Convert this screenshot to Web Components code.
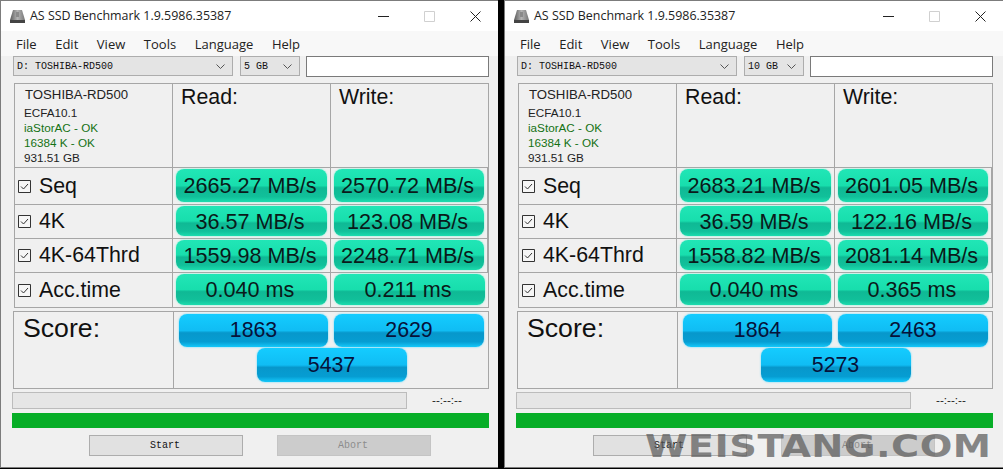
<!DOCTYPE html>
<html lang="en">
<head>
<meta charset="utf-8">
<title>AS SSD Benchmark</title>
<style>
  html, body { margin: 0; background: #000; overflow: hidden; }
  body { width: 1003px; height: 469px; }
</style>
</head>
<body>
<bench-page>
  <ssd-window size="5 GB"
    seq-r="2665.27 MB/s" seq-w="2570.72 MB/s"
    k4-r="36.57 MB/s" k4-w="123.08 MB/s"
    thrd-r="1559.98 MB/s" thrd-w="2248.71 MB/s"
    acc-r="0.040 ms" acc-w="0.211 ms"
    score-r="1863" score-w="2629" score-t="5437"></ssd-window>
  <ssd-window size="10 GB"
    seq-r="2683.21 MB/s" seq-w="2601.05 MB/s"
    k4-r="36.59 MB/s" k4-w="122.16 MB/s"
    thrd-r="1558.82 MB/s" thrd-w="2081.14 MB/s"
    acc-r="0.040 ms" acc-w="0.365 ms"
    score-r="1864" score-w="2463" score-t="5273"></ssd-window>
  <water-mark>WEISTANG.COM</water-mark>
</bench-page>

<script>
class BenchPage extends HTMLElement {
  connectedCallback() {
    if (this.shadowRoot) return;
    this.attachShadow({ mode: "open" });
    this.shadowRoot.innerHTML = `
<style>
  :host {
    display: flex;
    gap: 6px;
    position: relative;
    width: 1003px;
    height: 469px;
    background: #000;
  }
</style>
<slot></slot>`;
  }
}

class WaterMark extends HTMLElement {
  connectedCallback() {
    if (this.shadowRoot) return;
    this.attachShadow({ mode: "open" });
    this.shadowRoot.innerHTML = `
<style>
  :host {
    position: absolute;
    left: 645px;
    top: 428px;
    display: block;
    font: bold 32px/36px "DejaVu Sans", sans-serif;
    letter-spacing: 0.4px;
    color: rgba(92, 92, 92, 0.72);
    white-space: nowrap;
    transform: scaleX(1.2);
    transform-origin: left center;
  }
</style>
<slot></slot>`;
  }
}

class TitleBar extends HTMLElement {
  connectedCallback() {
    if (this.shadowRoot) return;
    this.attachShadow({ mode: "open" });
    this.shadowRoot.innerHTML = `
<style>
  :host {
    display: flex;
    align-items: center;
    height: 30px;
    background: #fff;
    font: 12.45px "Open Sans", sans-serif;
    color: #222;
  }
  .icon { margin: 0 4px 0 8px; }
  .text { flex: 1; padding-bottom: 1px; }
  .btn { width: 46px; height: 30px; display: flex; align-items: center; justify-content: center; }
</style>
<svg class="icon" width="17" height="15" viewBox="0 0 17 15">
  <defs>
    <linearGradient id="hdd" x1="0" x2="1" y1="0" y2="0">
      <stop offset="0" stop-color="#5c5c5c"/><stop offset=".5" stop-color="#b4b4b4"/><stop offset="1" stop-color="#777"/>
    </linearGradient>
  </defs>
  <path d="M4 1h9l3 10H1z" fill="url(#hdd)"/>
  <path d="M1 11h15v3H1z" fill="#444"/>
  <path d="M7 3h3v5H7z" fill="#8a8a8a"/>
</svg>
<span class="text"><slot></slot></span>
<span class="btn"><svg width="11" height="11" viewBox="0 0 11 11"><path d="M0 5.5h11" stroke="#222" stroke-width="1"/></svg></span>
<span class="btn"><svg width="11" height="11" viewBox="0 0 11 11"><path d="M.5.5h10v10H.5z" fill="none" stroke="#d0d0d0"/></svg></span>
<span class="btn"><svg width="11" height="11" viewBox="0 0 11 11"><path d="M.5.5l10 10M10.5.5l-10 10" stroke="#222" fill="none"/></svg></span>`;
  }
}

class MenuBar extends HTMLElement {
  connectedCallback() {
    if (this.shadowRoot) return;
    this.attachShadow({ mode: "open" });
    this.shadowRoot.innerHTML = `
<style>
  :host {
    display: flex;
    align-items: center;
    gap: 18.6px;
    height: 25px;
    padding-left: 15px;
    background: #f8f8f8;
    font: 13px "Open Sans", sans-serif;
    color: #222;
  }
</style>
<span>File</span><span>Edit</span><span>View</span><span>Tools</span><span>Language</span><span>Help</span>`;
  }
}

class ComboBox extends HTMLElement {
  connectedCallback() {
    if (this.shadowRoot) return;
    this.attachShadow({ mode: "open" });
    this.shadowRoot.innerHTML = `
<style>
  :host {
    display: flex;
    align-items: center;
    justify-content: space-between;
    box-sizing: border-box;
    height: 20px;
    padding: 0 7px 0 3px;
    background: #e4e4e4;
    border: 1px solid #adadad;
    font: 10px "Liberation Mono", monospace;
    color: #111;
  }
</style>
<slot></slot>
<svg width="9" height="5" viewBox="0 0 9 5"><path d="M.5.5l4 4 4-4" fill="none" stroke="#555"/></svg>`;
  }
}

class ValuePill extends HTMLElement {
  connectedCallback() {
    if (this.shadowRoot) return;
    this.attachShadow({ mode: "open" });
    this.shadowRoot.innerHTML = `
<style>
  :host {
    display: flex;
    align-items: center;
    justify-content: center;
    box-sizing: border-box;
    padding: 1px 3px 0 0;
    border-radius: 8px;
    font: 21.6px "Liberation Sans", sans-serif;
    color: #0a1a1a;
    white-space: nowrap;
    background: linear-gradient(#21e6b6 0, #18dead 50%, #0fb995 57%, #11c09a 84%, #1cdcae 100%);
    box-shadow: 0 0 2px #6ef3d2;
  }
  :host([kind="score"]) {
    padding: 0;
    font-size: 21.33px;
    color: #06123a;
    background: linear-gradient(#14ccff 0, #10bdf4 50%, #0797cb 57%, #069dd2 84%, #14c8fa 100%);
    box-shadow: 0 0 2px #4fd8ff;
  }
</style>
<slot></slot>`;
  }
}

class ResultCell extends HTMLElement {
  connectedCallback() {
    if (this.shadowRoot) return;
    this.attachShadow({ mode: "open" });
    this.shadowRoot.innerHTML = `
<style>
  :host {
    display: grid;
    box-sizing: border-box;
    padding: 1px 3px 2px;
    border-top: 1px solid #a6a6a6;
    border-right: 1px solid #a6a6a6;
  }
  :host(:last-child) { border-right: 0; }
</style>
<slot></slot>`;
  }
}

class RowLabel extends HTMLElement {
  connectedCallback() {
    if (this.shadowRoot) return;
    this.attachShadow({ mode: "open" });
    this.shadowRoot.innerHTML = `
<style>
  :host {
    display: flex;
    align-items: center;
    gap: 8px;
    box-sizing: border-box;
    padding: 0 0 0 3px;
    border-top: 1px solid #a6a6a6;
    border-right: 1px solid #a6a6a6;
    font: 21.33px "Liberation Sans", sans-serif;
    color: #111;
  }
</style>
<svg width="13" height="13" viewBox="0 0 13 13">
  <path d="M.5.5h12v12H.5z" fill="#f6f6f6" stroke="#333"/>
  <path d="M3 6.5l2.5 2.5 4.5-5" fill="none" stroke="#333"/>
</svg>
<slot></slot>`;
  }
}

class ScorePanel extends HTMLElement {
  connectedCallback() {
    if (this.shadowRoot) return;
    this.attachShadow({ mode: "open" });
    this.shadowRoot.innerHTML = `
<style>
  :host {
    display: grid;
    grid-template-columns: 160px 1fr;
    box-sizing: border-box;
    height: 78px;
    margin: 3px 0 0 -1px;
    border: 1px solid #a6a6a6;
  }
  .name {
    border-right: 1px solid #a6a6a6;
    padding: 0 0 0 9px;
    font: 26.67px/32px "Liberation Sans", sans-serif;
    color: #111;
  }
  .vals {
    display: grid;
    grid-template-columns: 149px 150px;
    grid-template-rows: 33px 34px;
    gap: 1px 6px;
    padding: 2px 0 0 5px;
  }
  .total { grid-column: 1 / 3; justify-self: center; width: 150px; }
</style>
<div class="name">Score:</div>
<div class="vals">
  <value-pill kind="score"><slot name="r"></slot></value-pill>
  <value-pill kind="score"><slot name="w"></slot></value-pill>
  <value-pill kind="score" class="total"><slot name="t"></slot></value-pill>
</div>`;
  }
}

const windowTemplate = document.createElement("template");
windowTemplate.innerHTML = `
<style>
  :host {
    display: flex;
    flex-direction: column;
    flex: 0 0 498px;
    box-sizing: border-box;
    height: 468px;
    background: #f0f0f0;
    border: 1px solid #7c7c7c;
    border-right: 0;
  }
  :host(:last-of-type) { flex: 0 0 499px; }
  .tools {
    display: grid;
    grid-template-columns: 220px 60px 183px;
    column-gap: 7px;
    padding-left: 12px;
    height: 21px;
  }
  .tools input {
    box-sizing: border-box;
    height: 21px;
    margin-left: -1px;
    width: 183px;
    border: 1px solid #7a7a7a;
    background: #fff;
    padding: 0;
  }
  .main { margin: 6px 0 0 13px; width: 475px; }
  .table {
    display: grid;
    grid-template-columns: 158px 158px 157px;
    grid-template-rows: 83px 37px 34px 34px 35px;
    box-sizing: border-box;
    border: 1px solid #a6a6a6;
    height: 225px;
  }
  .head {
    border-right: 1px solid #a6a6a6;
    padding: 0 0 0 8px;
    font: 21.33px/26px "Liberation Sans", sans-serif;
    color: #111;
  }
  .head:last-of-type { border-right: 0; }
  .drive {
    border-right: 1px solid #a6a6a6;
    padding: 3px 0 0 9px;
    font: 11.7px/15px "Liberation Sans", sans-serif;
    color: #222;
  }
  .drive .name { font-size: 13.2px; padding-left: 1px; line-height: 16px; margin-bottom: 2px; }
  .drive .ok { color: #147214; }
  .progress {
    display: flex;
    align-items: center;
    margin: 3px 0 0 11px;
    height: 17px;
  }
  .progress .track {
    box-sizing: border-box;
    width: 395px;
    height: 17px;
    background: #e6e6e6;
    border: 1px solid #bcbcbc;
  }
  .progress .time {
    margin: 0 0 3px 25px;
    font: 11.7px "Liberation Sans", sans-serif;
    color: #222;
  }
  .bar { margin: 4px 0 0 11px; width: 477px; height: 15px; background: #07ae27; }
  .buttons { display: flex; gap: 34px; margin: 7px 0 0 88px; }
  .buttons span {
    box-sizing: border-box;
    width: 154px;
    height: 21px;
    display: flex;
    align-items: center;
    justify-content: center;
    padding-right: 2px;
    background: #e1e1e1;
    border: 1px solid #adadad;
    font: 10px "Liberation Mono", monospace;
    color: #111;
  }
  .buttons .off { background: #cccccc; border-color: #c4c4c4; color: #8c8c8c; }
</style>
<title-bar>AS SSD Benchmark 1.9.5986.35387</title-bar>
<menu-bar></menu-bar>
<div class="tools">
  <combo-box>D: TOSHIBA-RD500</combo-box>
  <combo-box id="size"></combo-box>
  <input type="text" aria-label="Comment">
</div>
<div class="main">
  <div class="table">
    <div class="drive">
      <div class="name">TOSHIBA-RD500</div>
      <div>ECFA10.1</div>
      <div class="ok">iaStorAC - OK</div>
      <div class="ok">16384 K - OK</div>
      <div>931.51 GB</div>
    </div>
    <div class="head">Read:</div>
    <div class="head">Write:</div>
    <row-label>Seq</row-label>
    <result-cell><value-pill id="seq-r"></value-pill></result-cell>
    <result-cell><value-pill id="seq-w"></value-pill></result-cell>
    <row-label>4K</row-label>
    <result-cell><value-pill id="k4-r"></value-pill></result-cell>
    <result-cell><value-pill id="k4-w"></value-pill></result-cell>
    <row-label>4K-64Thrd</row-label>
    <result-cell><value-pill id="thrd-r"></value-pill></result-cell>
    <result-cell><value-pill id="thrd-w"></value-pill></result-cell>
    <row-label>Acc.time</row-label>
    <result-cell><value-pill id="acc-r"></value-pill></result-cell>
    <result-cell><value-pill id="acc-w"></value-pill></result-cell>
  </div>
  <score-panel>
    <span slot="r" id="score-r"></span>
    <span slot="w" id="score-w"></span>
    <span slot="t" id="score-t"></span>
  </score-panel>
</div>
<div class="progress"><div class="track"></div><div class="time">--:--:--</div></div>
<div class="bar"></div>
<div class="buttons"><span>Start</span><span class="off">Abort</span></div>`;

class SsdWindow extends HTMLElement {
  connectedCallback() {
    if (this.shadowRoot) return;
    var self = this;
    self.attachShadow({ mode: "open" });
    self.shadowRoot.appendChild(windowTemplate.content.cloneNode(true));
    self.shadowRoot.getElementById("size").textContent = self.getAttribute("size");
    ["seq-r", "seq-w", "k4-r", "k4-w", "thrd-r", "thrd-w", "acc-r", "acc-w", "score-r", "score-w", "score-t"]
      .forEach(function(name) {
        self.shadowRoot.getElementById(name).textContent = self.getAttribute(name);
      });
  }
}

customElements.define("bench-page", BenchPage);
customElements.define("water-mark", WaterMark);
customElements.define("title-bar", TitleBar);
customElements.define("menu-bar", MenuBar);
customElements.define("combo-box", ComboBox);
customElements.define("value-pill", ValuePill);
customElements.define("result-cell", ResultCell);
customElements.define("row-label", RowLabel);
customElements.define("score-panel", ScorePanel);
customElements.define("ssd-window", SsdWindow);
</script>
</body>
</html>
